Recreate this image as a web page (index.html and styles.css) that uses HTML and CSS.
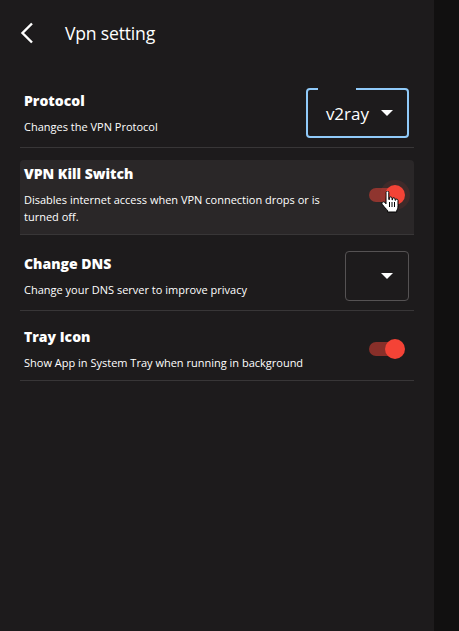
FILE: index.html
```html
<!DOCTYPE html>
<html lang="en">
<head>
    <meta charset="UTF-8">
    <meta name="viewport" content="width=device-width, initial-scale=1.0">
    <title>Vpn setting</title>
    <link rel="stylesheet" href="styles.css">
</head>
<body>
    <div class="panel">
        <div class="header">
            <button class="back" aria-label="Back">
                <svg width="14" height="22" viewBox="0 0 14 22"><path d="M12 1.5 L2.5 11 L12 20.5" fill="none" stroke="#fff" stroke-width="2.4"/></svg>
            </button>
            <h1>Vpn setting</h1>
        </div>

        <ul class="settings">
            <li class="item">
                <div class="text">
                    <div class="title">Protocol</div>
                    <div class="desc">Changes the VPN Protocol</div>
                </div>
                <fieldset class="select focused">
                    <legend></legend>
                    <span class="value">v2ray</span>
                    <svg class="caret" width="12" height="6" viewBox="0 0 12 6"><path d="M0 0 L12 0 L6 6 Z" fill="#fff"/></svg>
                </fieldset>
            </li>
            <li class="item hover">
                <div class="text">
                    <div class="title">VPN Kill Switch</div>
                    <div class="desc">Disables internet access when VPN connection drops or is turned off.</div>
                </div>
                <label class="switch on">
                    <span class="track"></span>
                    <span class="thumb"></span>
                    <svg class="cursor" width="18" height="22" viewBox="0 0 18 22">
                        <path d="M5 1.5c0-.8.6-1.5 1.4-1.5s1.4.7 1.4 1.5v7h.6V7.2c0-.8.6-1.4 1.3-1.4s1.3.6 1.3 1.4v1.6h.5V8c0-.8.6-1.3 1.3-1.3s1.3.5 1.3 1.3v1.3h.4c0-.7.6-1.2 1.2-1.2s1.3.5 1.3 1.3v5.4c0 2.2-.5 3.6-1.3 4.8V21H6.6v-1.6C5 18 3.3 16 1.4 13.6c-.7-.9-.6-1.900.1-2.400.7-.6 1.7-.4 2.3.3L5 12.8z" fill="#fff" stroke="#000" stroke-width="1"/>
                        <path d="M8.5 11v5M11 11v5M13.5 11v5" stroke="#000" stroke-width="1"/>
                    </svg>
                </label>
            </li>
            <li class="item">
                <div class="text">
                    <div class="title">Change DNS</div>
                    <div class="desc">Change your DNS server to improve privacy</div>
                </div>
                <div class="select small">
                    <svg class="caret" width="12" height="6" viewBox="0 0 12 6"><path d="M0 0 L12 0 L6 6 Z" fill="#fff"/></svg>
                </div>
            </li>
            <li class="item">
                <div class="text">
                    <div class="title">Tray Icon</div>
                    <div class="desc">Show App in System Tray when running in background</div>
                </div>
                <label class="switch on">
                    <span class="track"></span>
                    <span class="thumb"></span>
                </label>
            </li>
        </ul>
    </div>
    <div class="side"></div>
</body>
</html>
```

FILE: styles.css
```css
body {
    margin: 0;
    padding: 0;
    display: flex;
    height: 631px;
    overflow: hidden;
    font-family: "Open Sans", "Noto Sans", sans-serif;
    color: #fff;
    background-color: #111010;
}
.panel {
    width: 434px;
    height: 631px;
    background-color: #1d1b1c;
}
.side {
    flex: 1;
    background-color: #111010;
}
.header {
    display: flex;
    align-items: center;
    height: 66px;
    padding: 0 20px;
}
.back {
    background: none;
    border: none;
    padding: 0;
    margin: 0 31px 0 0;
    width: 14px;
    height: 22px;
    cursor: pointer;
}
.back svg {
    display: block;
}
h1 {
    margin: 0;
    font-size: 17.6px;
    font-weight: 400;
    letter-spacing: -0.2px;
}
.settings {
    list-style: none;
    margin: 0;
    padding: 0 20px;
}
.item {
    display: flex;
    align-items: center;
    justify-content: space-between;
    margin-top: 12px;
    padding: 4px 4px 9px 4px;
    border-bottom: 1px solid #383637;
    border-radius: 4px 4px 0 0;
}
.item:first-child {
    margin-top: 18px;
}
.item.hover {
    background-color: #2a2728;
}
.title {
    font-size: 14px;
    font-weight: 800;
    line-height: 20px;
    margin-bottom: 7px;
}
.desc {
    font-size: 11px;
    line-height: 17px;
    max-width: 300px;
}
.select {
    display: flex;
    align-items: center;
    justify-content: flex-end;
    box-sizing: border-box;
    margin: 0 1px 0 0;
    border-radius: 4px;
}
.select.focused {
    width: 103px;
    height: 50px;
    border: 2px solid #90caf9;
    padding: 0 14px 0 15px;
    min-width: 0;
    position: relative;
}
.select.focused legend {
    position: absolute;
    top: -2px;
    left: 10px;
    width: 38px;
    height: 2px;
    padding: 0;
    background-color: #1d1b1c;
}
.select.small {
    width: 64px;
    height: 50px;
    border: 1px solid #555253;
    padding: 0 15px 0 0;
}
.value {
    font-size: 17px;
    margin-right: 12px;
}
.caret {
    display: block;
}
.switch {
    position: relative;
    width: 38px;
    height: 20px;
    margin-right: 3px;
}
.track {
    position: absolute;
    left: 0;
    top: 3px;
    width: 34px;
    height: 14px;
    border-radius: 7px;
    background-color: #f44336;
    opacity: 0.5;
}
.thumb {
    position: absolute;
    left: 16px;
    top: 0;
    width: 20px;
    height: 20px;
    border-radius: 50%;
    background-color: #f44336;
}
.hover .thumb {
    box-shadow: 0 0 0 5px rgba(244, 67, 54, 0.1);
}
.cursor {
    position: absolute;
    left: 12px;
    top: 6px;
}
```
